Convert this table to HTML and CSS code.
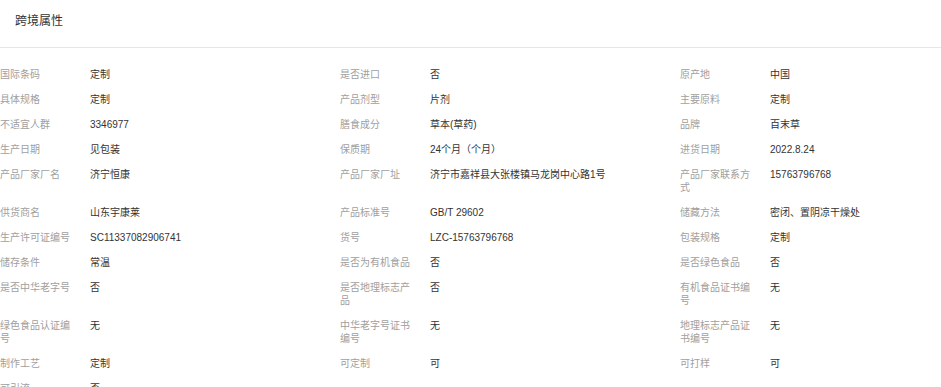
FILE: index.html
```html
<!DOCTYPE html>
<html lang="zh">
<head>
<meta charset="utf-8">
<title>跨境属性</title>
<link rel="stylesheet" href="styles.css">
</head>
<body>
<div class="panel">
  <div class="panel-head">跨境属性</div>
  <div class="attr-grid">
    <div class="cell"><span class="label">国际条码</span><span class="value">定制</span></div>
    <div class="cell"><span class="label">是否进口</span><span class="value">否</span></div>
    <div class="cell"><span class="label">原产地</span><span class="value">中国</span></div>

    <div class="cell"><span class="label">具体规格</span><span class="value">定制</span></div>
    <div class="cell"><span class="label">产品剂型</span><span class="value">片剂</span></div>
    <div class="cell"><span class="label">主要原料</span><span class="value">定制</span></div>

    <div class="cell"><span class="label">不适宜人群</span><span class="value">3346977</span></div>
    <div class="cell"><span class="label">膳食成分</span><span class="value">草本(草药)</span></div>
    <div class="cell"><span class="label">品牌</span><span class="value">百末草</span></div>

    <div class="cell"><span class="label">生产日期</span><span class="value">见包装</span></div>
    <div class="cell"><span class="label">保质期</span><span class="value">24个月（个月）</span></div>
    <div class="cell"><span class="label">进货日期</span><span class="value">2022.8.24</span></div>

    <div class="cell"><span class="label">产品厂家厂名</span><span class="value">济宁恒康</span></div>
    <div class="cell"><span class="label">产品厂家厂址</span><span class="value">济宁市嘉祥县大张楼镇马龙岗中心路1号</span></div>
    <div class="cell"><span class="label">产品厂家联系方式</span><span class="value">15763796768</span></div>

    <div class="cell"><span class="label">供货商名</span><span class="value">山东宇康莱</span></div>
    <div class="cell"><span class="label">产品标准号</span><span class="value">GB/T 29602</span></div>
    <div class="cell"><span class="label">储藏方法</span><span class="value">密闭、置阴凉干燥处</span></div>

    <div class="cell"><span class="label">生产许可证编号</span><span class="value">SC11337082906741</span></div>
    <div class="cell"><span class="label">货号</span><span class="value">LZC-15763796768</span></div>
    <div class="cell"><span class="label">包装规格</span><span class="value">定制</span></div>

    <div class="cell"><span class="label">储存条件</span><span class="value">常温</span></div>
    <div class="cell"><span class="label">是否为有机食品</span><span class="value">否</span></div>
    <div class="cell"><span class="label">是否绿色食品</span><span class="value">否</span></div>

    <div class="cell"><span class="label">是否中华老字号</span><span class="value">否</span></div>
    <div class="cell"><span class="label">是否地理标志产品</span><span class="value">否</span></div>
    <div class="cell"><span class="label">有机食品证书编号</span><span class="value">无</span></div>

    <div class="cell"><span class="label">绿色食品认证编号</span><span class="value">无</span></div>
    <div class="cell"><span class="label">中华老字号证书编号</span><span class="value">无</span></div>
    <div class="cell"><span class="label">地理标志产品证书编号</span><span class="value">无</span></div>

    <div class="cell"><span class="label">制作工艺</span><span class="value">定制</span></div>
    <div class="cell"><span class="label">可定制</span><span class="value">可</span></div>
    <div class="cell"><span class="label">可打样</span><span class="value">可</span></div>

    <div class="cell"><span class="label">可引流</span><span class="value">否</span></div>
  </div>
</div>
</body>
</html>
```

FILE: styles.css
```css
html, body {
  margin: 0;
  padding: 0;
  background: #ffffff;
}

body {
  font-family: "Liberation Sans", "Noto Sans CJK SC", sans-serif;
  overflow: hidden;
}

.panel {
  width: 941px;
}

.panel-head {
  font-size: 12px;
  line-height: 17px;
  color: #333333;
  padding: 13px 15px 17px;
  border-bottom: 1px solid #e6e6e6;
}

.attr-grid {
  display: grid;
  grid-template-columns: 340px 340px 261px;
  padding-top: 14px;
}

.cell {
  display: flex;
  align-items: flex-start;
  padding: 6px 0;
  font-size: 10px;
  line-height: 13px;
}

.label {
  flex: 0 0 75px;
  width: 75px;
  margin-right: 15px;
  color: #a0a0a0;
  word-break: break-all;
}

.value {
  flex: 1 1 auto;
  color: #333333;
}
```
